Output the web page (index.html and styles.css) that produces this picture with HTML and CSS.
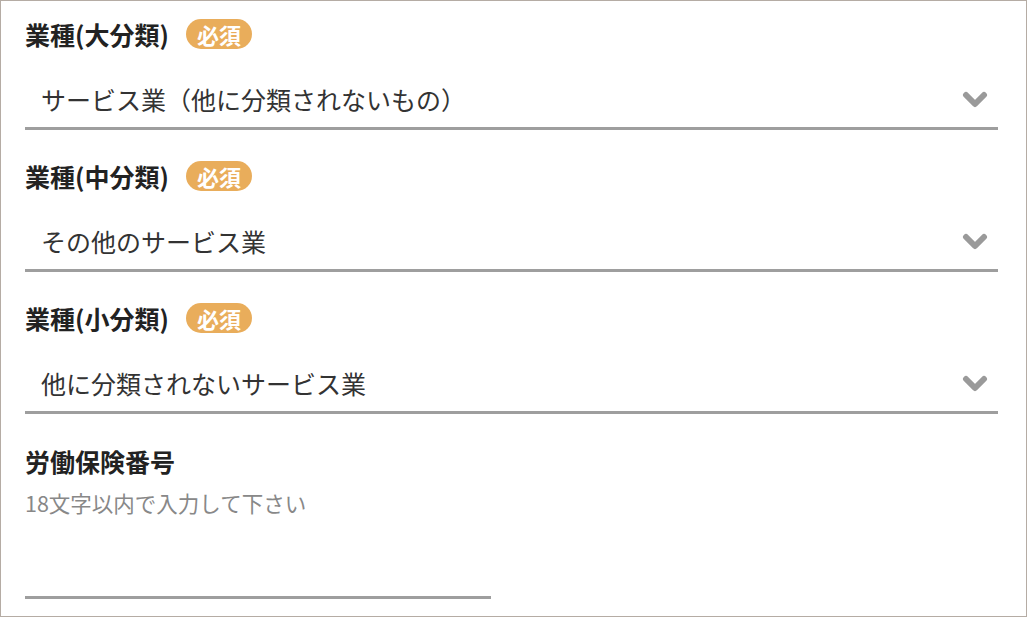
FILE: index.html
```html
<!DOCTYPE html>
<html lang="ja">
<head>
<meta charset="utf-8">
<link rel="stylesheet" href="styles.css">
</head>
<body>
<div class="frame">
  <div class="field">
    <div class="label-row"><span class="label">業種(大分類)</span><span class="badge">必須</span></div>
    <div class="select"><span class="value">サービス業（他に分類されないもの）</span>
      <svg class="chev" width="26" height="17" viewBox="0 0 26 17"><polyline points="4,4 13,13 22,4" fill="none" stroke="#9a9a9a" stroke-width="6" stroke-linecap="round" stroke-linejoin="round"/></svg>
    </div>
  </div>
  <div class="field">
    <div class="label-row"><span class="label">業種(中分類)</span><span class="badge">必須</span></div>
    <div class="select"><span class="value">その他のサービス業</span>
      <svg class="chev" width="26" height="17" viewBox="0 0 26 17"><polyline points="4,4 13,13 22,4" fill="none" stroke="#9a9a9a" stroke-width="6" stroke-linecap="round" stroke-linejoin="round"/></svg>
    </div>
  </div>
  <div class="field">
    <div class="label-row"><span class="label">業種(小分類)</span><span class="badge">必須</span></div>
    <div class="select"><span class="value">他に分類されないサービス業</span>
      <svg class="chev" width="26" height="17" viewBox="0 0 26 17"><polyline points="4,4 13,13 22,4" fill="none" stroke="#9a9a9a" stroke-width="6" stroke-linecap="round" stroke-linejoin="round"/></svg>
    </div>
  </div>
  <div class="field field-text">
    <div class="label-row"><span class="label">労働保険番号</span></div>
    <div class="hint">18文字以内で入力して下さい</div>
    <div class="input"></div>
  </div>
</div>
</body>
</html>
```
FILE: styles.css
```css
* { box-sizing: border-box; }
html, body { margin: 0; padding: 0; background: #fff; }
body { font-family: "Noto Sans CJK JP", "Noto Sans", sans-serif; }
.frame {
  width: 1027px;
  height: 617px;
  border: 1px solid #b5aca4;
  padding: 18px 28px 0 24px;
  display: flex;
  flex-direction: column;
  gap: 31px;
  overflow: hidden;
}
.field-text { padding-top: 4px; }
.label-row {
  display: flex;
  align-items: center;
  gap: 17px;
}
.label {
  font-size: 25px;
  font-weight: 700;
  color: #222;
  line-height: 24px;
}
.badge {
  height: 30px;
  padding: 0 11px;
  border-radius: 15px;
  background: #e9ad5b;
  color: #fff;
  font-weight: 700;
  font-size: 22px;
  line-height: 30px;
}
.select {
  margin-top: 22px;
  height: 59px;
  border-bottom: 3px solid #9e9e9e;
  display: flex;
  align-items: center;
  justify-content: space-between;
  padding: 0 10px 0 16px;
}
.value {
  font-size: 25px;
  color: #333;
}
.hint {
  margin-top: 18px;
  font-size: 21.5px;
  line-height: 24px;
  color: #888;
}
.input {
  width: 466px;
  height: 84px;
  border-bottom: 3px solid #9e9e9e;
}
```
